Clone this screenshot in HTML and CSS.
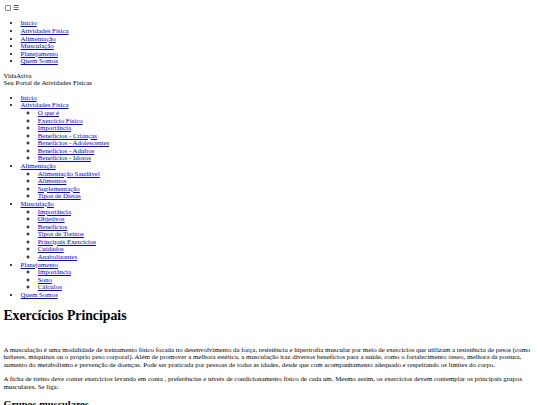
FILE: index.html
```html
<!DOCTYPE html>
<html lang="pt-BR">
<head>
<meta charset="utf-8">
<title>VidaAtiva</title>
<link rel="stylesheet" href="styles.css">
</head>
<body class="page">
<header class="site-header">
  <div class="menu-toggle">
    <input type="checkbox" class="menu-check" id="menu"><label for="menu" class="menu-icon">☰</label>
  </div>
  <nav class="mobile-nav">
    <ul class="nav-list">
      <li><a href="#">Início</a></li>
      <li><a href="#">Atividades Física</a></li>
      <li><a href="#">Alimentação</a></li>
      <li><a href="#">Musculação</a></li>
      <li><a href="#">Planejamento</a></li>
      <li><a href="#">Quem Somos</a></li>
    </ul>
  </nav>
  <div class="logo">
    <div class="logo-name">VidaAtiva</div>
    <div class="logo-tag">Seu Portal de Atividades Físicas</div>
  </div>
  <nav class="main-nav">
    <ul class="nav-list">
      <li><a href="#">Início</a></li>
      <li><a href="#">Atividades Física</a>
        <ul class="sub-list">
          <li><a href="#">O que é</a></li>
          <li><a href="#">Exercício Físico</a></li>
          <li><a href="#">Importância</a></li>
          <li><a href="#">Benefícios - Crianças</a></li>
          <li><a href="#">Benefícios - Adolescentes</a></li>
          <li><a href="#">Benefícios - Adultos</a></li>
          <li><a href="#">Benefícios - Idosos</a></li>
        </ul>
      </li>
      <li><a href="#">Alimentação</a>
        <ul class="sub-list">
          <li><a href="#">Alimentação Saudável</a></li>
          <li><a href="#">Alimentos</a></li>
          <li><a href="#">Suplementação</a></li>
          <li><a href="#">Tipos de Dietas</a></li>
        </ul>
      </li>
      <li><a href="#">Musculação</a>
        <ul class="sub-list">
          <li><a href="#">Importância</a></li>
          <li><a href="#">Objetivos</a></li>
          <li><a href="#">Benefícios</a></li>
          <li><a href="#">Tipos de Treinos</a></li>
          <li><a href="#">Principais Exercícios</a></li>
          <li><a href="#">Cuidados</a></li>
          <li><a href="#">Anabolizantes</a></li>
        </ul>
      </li>
      <li><a href="#">Planejamento</a>
        <ul class="sub-list">
          <li><a href="#">Importância</a></li>
          <li><a href="#">Sono</a></li>
          <li><a href="#">Cálculos</a></li>
        </ul>
      </li>
      <li><a href="#">Quem Somos</a></li>
    </ul>
  </nav>
</header>
<main class="content">
  <h1 class="title">Exercícios Principais</h1>
  <p class="text">A musculação é uma modalidade de treinamento físico focada no desenvolvimento da força, resistência e hipertrofia muscular por meio de exercícios que utilizam a resistência de pesos (como halteres, máquinas ou o próprio peso corporal). Além de promover a melhora estética, a musculação traz diversos benefícios para a saúde, como o fortalecimento ósseo, melhora da postura, aumento do metabolismo e prevenção de doenças. Pode ser praticada por pessoas de todas as idades, desde que com acompanhamento adequado e respeitando os limites do corpo.</p>
  <p class="text">A ficha de treino deve conter exercícios levando em conta , preferências e níveis de condicionamento físico de cada um. Mesmo assim, os exercícios devem contemplar os principais grupos musculares. Se liga:</p>
  <h2 class="subtitle">Grupos musculares</h2>
</main>
</body>
</html>
```
FILE: styles.css
```css
html {
  font-size: 6.88px;
}
.page {
  margin: 3.4px;
  font-family: "Liberation Serif", "Times New Roman", serif;
  font-size: 1rem;
  line-height: 1.103;
  color: #000;
  background: #fff;
}
.menu-toggle {
  display: flex;
  align-items: center;
  gap: 2.4px;
  height: 9.2px;
}
.menu-check {
  appearance: none;
  -webkit-appearance: none;
  width: 5.6px;
  height: 5.6px;
  margin: 0 0 0 1.7px;
  border: 0.6px solid #8a8a8a;
  border-radius: 1px;
  background: #fff;
  box-sizing: border-box;
}
.menu-icon {
  font-family: "DejaVu Sans", sans-serif;
  font-size: 1rem;
  line-height: 1;
  color: #222;
}
.nav-list {
  margin: 1em 0;
  padding-left: 17.2px;
  list-style: disc;
}
.sub-list {
  margin: 0;
  padding-left: 17.2px;
  list-style: circle;
}
a {
  color: #0000ee;
  text-decoration: underline;
}
.title {
  font-size: 2em;
  font-weight: bold;
  line-height: 1.16;
  margin: 0.67em 0 22px;
}
.text {
  margin: 1em 0;
}
.subtitle {
  font-size: 1.5em;
  font-weight: bold;
  line-height: 1.16;
  margin: 0.83em 0;
}
```
